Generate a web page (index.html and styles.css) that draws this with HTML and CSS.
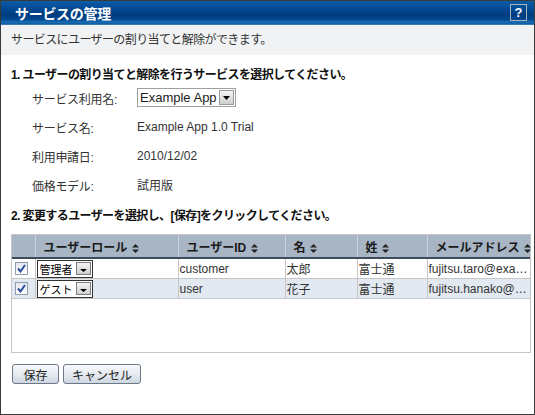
FILE: index.html
```html
<!DOCTYPE html>
<html lang="ja">
<head>
<meta charset="utf-8">
<title>サービスの管理</title>
<link rel="stylesheet" href="styles.css">
</head>
<body>
<div class="panel">
  <div class="titlebar">
    <span class="title">サービスの管理</span>
    <span class="help">?</span>
  </div>
  <div class="desc">サービスにユーザーの割り当てと解除ができます。</div>
  <div class="content">
    <div class="heading">1. ユーザーの割り当てと解除を行うサービスを選択してください。</div>
    <div class="form">
      <div class="label">サービス利用名:</div>
      <div class="value">
        <div class="select main-select">
          <span class="sel-text">Example App</span>
          <span class="sel-btn"><svg width="7" height="4" viewBox="0 0 7 4"><path d="M0 0h7L3.5 4z" fill="#000"/></svg></span>
        </div>
      </div>
      <div class="label">サービス名:</div>
      <div class="value">Example App 1.0 Trial</div>
      <div class="label">利用申請日:</div>
      <div class="value">2010/12/02</div>
      <div class="label">価格モデル:</div>
      <div class="value">試用版</div>
    </div>
    <div class="heading h2">2. 変更するユーザーを選択し、[保存]をクリックしてください。</div>
    <div class="grid-wrap">
      <table class="grid">
        <colgroup>
          <col class="c0"><col class="c1"><col class="c2"><col class="c3"><col class="c4"><col class="c5">
        </colgroup>
        <thead>
          <tr>
            <th></th>
            <th>ユーザーロール <svg class="sort" width="7" height="9" viewBox="0 0 7 9"><path d="M0 3.5L3.5 0 7 3.5zM0 5.5h7L3.5 9z" fill="#222"/></svg></th>
            <th>ユーザーID <svg class="sort" width="7" height="9" viewBox="0 0 7 9"><path d="M0 3.5L3.5 0 7 3.5zM0 5.5h7L3.5 9z" fill="#222"/></svg></th>
            <th>名 <svg class="sort" width="7" height="9" viewBox="0 0 7 9"><path d="M0 3.5L3.5 0 7 3.5zM0 5.5h7L3.5 9z" fill="#222"/></svg></th>
            <th>姓 <svg class="sort" width="7" height="9" viewBox="0 0 7 9"><path d="M0 3.5L3.5 0 7 3.5zM0 5.5h7L3.5 9z" fill="#222"/></svg></th>
            <th>メールアドレス <svg class="sort" width="7" height="9" viewBox="0 0 7 9"><path d="M0 3.5L3.5 0 7 3.5zM0 5.5h7L3.5 9z" fill="#222"/></svg></th>
          </tr>
        </thead>
        <tbody>
          <tr>
            <td class="cb"><span class="check"><svg width="9" height="9" viewBox="0 0 9 9"><path d="M1 4.5L3.5 7.5 8 1" fill="none" stroke="#2a4fa0" stroke-width="2"/></svg></span></td>
            <td class="role"><div class="select role-select"><span class="sel-text">管理者</span><span class="sel-btn small"><svg width="7" height="3" viewBox="0 0 7 3"><path d="M0 0h7L3.5 3z" fill="#000"/></svg></span></div></td>
            <td>customer</td>
            <td>太郎</td>
            <td>富士通</td>
            <td class="mail">fujitsu.taro@example.com</td>
          </tr>
          <tr class="alt">
            <td class="cb"><span class="check"><svg width="9" height="9" viewBox="0 0 9 9"><path d="M1 4.5L3.5 7.5 8 1" fill="none" stroke="#2a4fa0" stroke-width="2"/></svg></span></td>
            <td class="role"><div class="select role-select"><span class="sel-text">ゲスト</span><span class="sel-btn small"><svg width="7" height="3" viewBox="0 0 7 3"><path d="M0 0h7L3.5 3z" fill="#000"/></svg></span></div></td>
            <td>user</td>
            <td>花子</td>
            <td>富士通</td>
            <td class="mail">fujitsu.hanako@example.com</td>
          </tr>
        </tbody>
      </table>
    </div>
    <div class="buttons">
      <button class="btn btn-save">保存</button>
      <button class="btn btn-cancel">キャンセル</button>
    </div>
  </div>
</div>
</body>
</html>
```

FILE: styles.css
```css
html, body {
  margin: 0;
  padding: 0;
  background: #fff;
}
body {
  font-family: "Liberation Sans", "Noto Sans CJK JP", sans-serif;
  font-size: 12px;
  color: #333;
}
.panel {
  width: 535px;
  height: 415px;
  box-sizing: border-box;
  border: 1px solid #3a3a3a;
  background: #fff;
}
.titlebar {
  height: 23px;
  display: flex;
  align-items: center;
  justify-content: space-between;
  padding: 0 7px 0 14px;
  background: linear-gradient(#0c5ca6 0%, #034c96 30%, #003c80 60%, #02478e 80%, #1a6fb6 92%, #0b5aa0 100%);
  border-bottom: 1px solid #3c78b4;
}
.title {
  color: #fff;
  font-weight: bold;
  font-size: 14px;
  letter-spacing: -0.3px;
}
.help {
  width: 15px;
  height: 15px;
  border: 1px solid #a9b3bd;
  color: #fff;
  font-weight: bold;
  font-size: 13px;
  line-height: 15px;
  text-align: center;
}
.desc {
  height: 30px;
  line-height: 30px;
  padding-left: 10px;
  background: #f1f2f4;
  color: #333;
  letter-spacing: -0.6px;
}
.content {
  padding: 0 3px 0 10px;
}
.heading {
  margin-top: 12px;
  height: 16px;
  line-height: 16px;
  font-weight: bold;
  color: #111;
  letter-spacing: -0.6px;
}
.heading.h2 {
  margin-top: 9px;
}
.form {
  display: grid;
  grid-template-columns: 105px auto;
  grid-auto-rows: 29px;
  padding-left: 21px;
  margin-top: 0;
}
.label, .value {
  display: flex;
  align-items: center;
  color: #333;
}
.label {
  padding-top: 2px;
  letter-spacing: -0.3px;
}
.select {
  display: flex;
  align-items: center;
  box-sizing: border-box;
  border: 1px solid #a0a0a0;
  background: #fff;
}
.main-select {
  width: 99px;
  height: 19px;
  padding: 0 1px 0 2px;
  justify-content: space-between;
}
.main-select .sel-text {
  font-size: 13px;
  color: #222;
}
.sel-btn {
  width: 15px;
  height: 15px;
  box-sizing: border-box;
  border: 1px solid #9a9a9a;
  background: linear-gradient(#f4f4f4, #cfcfcf);
  display: flex;
  align-items: center;
  justify-content: center;
}
.sel-btn.small {
  width: 15px;
  height: 13px;
  border-color: #7d7d7d;
  align-items: flex-end;
  padding-bottom: 2px;
}
.grid-wrap {
  margin-top: 10px;
  width: 520px;
  height: 119px;
  box-sizing: border-box;
  border: 1px solid #c6c6c6;
}
.grid {
  width: 518px;
  border-collapse: collapse;
  table-layout: fixed;
}
.c0 { width: 23px; }
.c1 { width: 143px; }
.c2 { width: 107px; }
.c3 { width: 72px; }
.c4 { width: 70px; }
.c5 { width: 103px; }
.grid th {
  height: 22px;
  padding: 0 0 0 8px;
  text-align: left;
  background: #a7b5c4;
  color: #1a1a1a;
  font-weight: bold;
  font-size: 12px;
  border-left: 1px solid #c9d2db;
  border-bottom: 2px solid #3e4b58;
  white-space: nowrap;
}
.grid th:first-child {
  border-left: none;
}
.sort {
  vertical-align: -1px;
  margin-left: 1px;
}
.grid td {
  height: 19px;
  padding: 0 0 0 1px;
  border-left: 1px solid #c6c6c6;
  border-bottom: 1px solid #c6c6c6;
  white-space: nowrap;
  overflow: hidden;
  text-overflow: ellipsis;
  color: #333;
  font-size: 12px;
}
.grid td:first-child {
  border-left: none;
}
.grid tr.alt td {
  background: #e2e9f0;
}
.grid td.cb {
  padding: 0 0 0 3px;
}
.check {
  width: 11px;
  height: 11px;
  border: 1px solid #8d9cae;
  background: linear-gradient(#e4e8ee, #fff);
  display: flex;
  align-items: center;
  justify-content: center;
}
.grid td.role {
  padding: 0 0 0 1px;
}
.role-select {
  width: 56px;
  height: 18px;
  padding: 0 1px 0 2px;
  border-color: #333;
  justify-content: space-between;
}
.role-select .sel-text {
  color: #000;
  font-size: 11px;
}
.buttons {
  display: flex;
  gap: 4px;
  margin-top: 11px;
  padding-left: 1px;
}
.btn {
  height: 20px;
  box-sizing: border-box;
  border: 1px solid #6b7886;
  border-radius: 3px;
  background: linear-gradient(#f7f9fb 0%, #e6ebf0 50%, #cdd6e0 100%);
  font-family: "Liberation Sans", "Noto Sans CJK JP", sans-serif;
  font-size: 12px;
  color: #222;
  padding: 0;
}
.btn-save { width: 47px; }
.btn-cancel { width: 78px; }
```
